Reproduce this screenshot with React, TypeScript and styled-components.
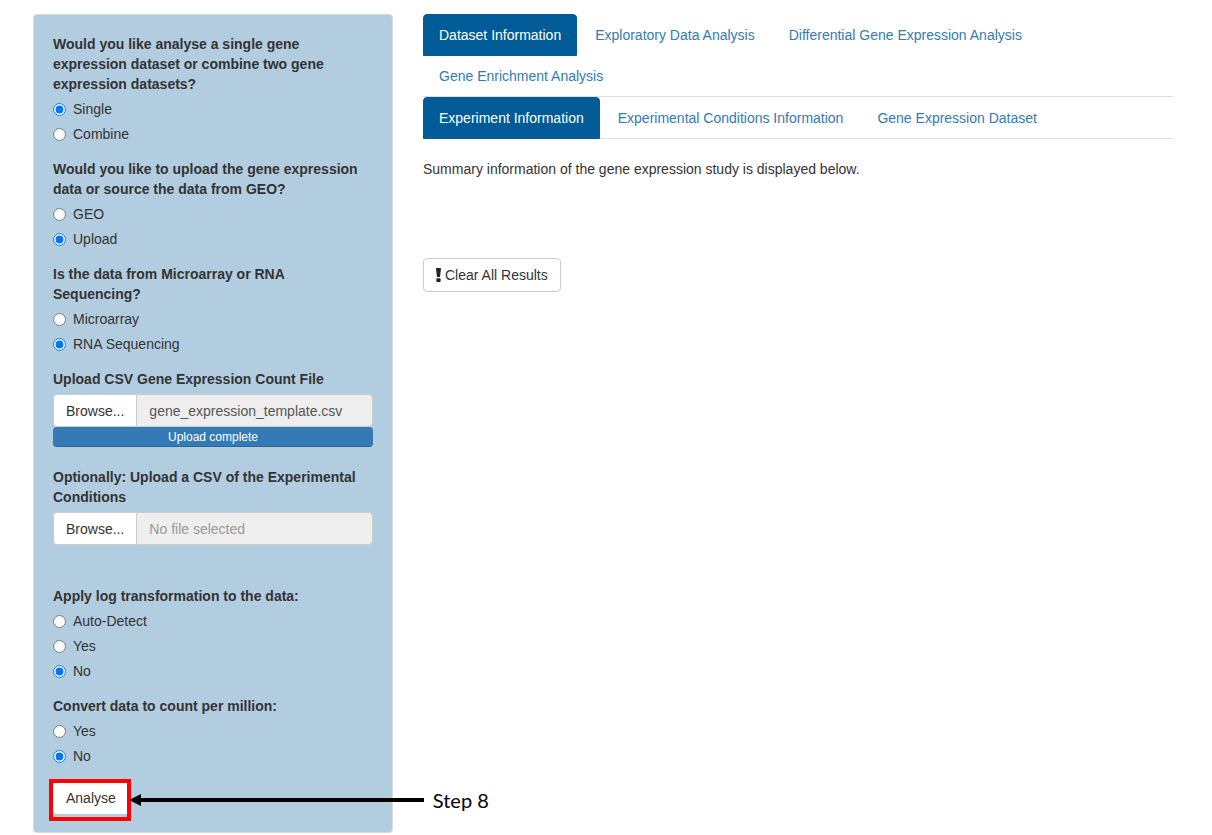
import React, { useId, useState } from "react";
import styled, { createGlobalStyle } from "styled-components";

const GlobalStyle = createGlobalStyle`
  *, *::before, *::after { box-sizing: border-box; }
  body {
    margin: 0;
    background: #fff;
    color: #333;
    font-family: "Liberation Sans", Arial, Helvetica, sans-serif;
    font-size: 14px;
    line-height: 20px;
  }
  input, button { font: inherit; }
`;

const Page = styled.div`
  display: grid;
  grid-template-columns: minmax(0, 1fr) minmax(0, 2fr);
  align-items: start;
  padding: 14px 24px 0 18px;
`;

const SideColumn = styled.aside`
  padding: 0 15px;
`;

const MainColumn = styled.main`
  padding: 0 15px;
`;

const Well = styled.form`
  padding: 19px 19px 18px;
  background: #b2cde0;
  border: 1px solid #d5dade;
  border-radius: 4px;
`;

const Group = styled.fieldset<{ $spaced?: boolean }>`
  min-width: 0;
  margin: ${(p) => (p.$spaced ? "41px" : "0")} 0 15px;
  padding: 0;
  border: 0;
`;

const Legend = styled.legend`
  padding: 0 0 5px;
  font-weight: 700;
`;

const Options = styled.div`
  display: flex;
  flex-direction: column;
  gap: 5px;
`;

const Option = styled.label`
  display: flex;
  align-items: center;
  gap: 7px;
  min-height: 20px;
`;

const Radio = styled.input`
  width: 13px;
  height: 13px;
  margin: 0;
`;

const FileGroup = styled.div`
  margin-bottom: 20px;
`;

const FileLabel = styled.label`
  display: block;
  margin-bottom: 5px;
  font-weight: 700;
`;

const FileRow = styled.div`
  display: flex;
  height: 33px;
`;

const Browse = styled.label`
  flex: none;
  overflow: hidden;
  padding: 6px 12px;
  background: #fff;
  border: 1px solid #ccc;
  border-radius: 4px 0 0 4px;
  cursor: pointer;
`;

const HiddenFile = styled.input`
  position: absolute;
  width: 1px;
  height: 1px;
  opacity: 0;
`;

const FileName = styled.input`
  flex: 1;
  min-width: 0;
  margin-left: -1px;
  padding: 0 12px;
  color: #555;
  background: #eee;
  border: 1px solid #ccc;
  border-radius: 0 4px 4px 0;
  &::placeholder { color: #999; opacity: 1; }
`;

const Progress = styled.div`
  height: 20px;
  color: #fff;
  background: #337ab7;
  border-radius: 4px;
  box-shadow: inset 0 -1px 0 rgba(0, 0, 0, 0.15);
  font-size: 12px;
  text-align: center;
`;

const Button = styled.button`
  display: inline-flex;
  align-items: center;
  gap: 4px;
  padding: 6px 12px;
  color: #333;
  background: #fff;
  border: 1px solid #ccc;
  border-radius: 4px;
  cursor: pointer;
`;

const Submit = styled(Button)`
  height: 33px;
  border-color: #fff;
`;

const Target = styled.div`
  position: relative;
  display: flex;
  width: max-content;
`;

const Highlight = styled.span`
  position: absolute;
  inset: -2px -2px -7px -4px;
  border: 4px solid #f00;
  pointer-events: none;
`;

const Callout = styled.div`
  position: absolute;
  top: 6px;
  left: 100%;
  display: flex;
  align-items: center;
  gap: 9px;
  color: #000;
  font-family: Lato, "Open Sans", sans-serif;
  font-size: 20px;
  line-height: 26px;
  white-space: nowrap;
`;

const Tabs = styled.nav`
  display: flex;
  flex-wrap: wrap;
  border-bottom: 1px solid #ddd;
`;

const Tab = styled.a<{ $active?: boolean }>`
  margin: 0 2px -1px 0;
  padding: 10px 15px;
  border: 1px solid ${(p) => (p.$active ? "#005b96" : "transparent")};
  border-radius: 4px 4px 0 0;
  color: ${(p) => (p.$active ? "#fff" : "#337ab7")};
  background: ${(p) => (p.$active ? "#005b96" : "transparent")};
  text-decoration: none;
`;

const Summary = styled.p`
  margin: 20px 0 79px;
`;

type RadioGroupProps = { title: string; options: string[]; initial: string; spaced?: boolean };

function RadioGroup({ title, options, initial, spaced }: RadioGroupProps) {
  const name = useId();
  const [value, setValue] = useState(initial);
  return (
    <Group $spaced={spaced}>
      <Legend>{title}</Legend>
      <Options>
        {options.map((o) => (
          <Option key={o}>
            <Radio type="radio" name={name} checked={value === o} onChange={() => setValue(o)} />
            {o}
          </Option>
        ))}
      </Options>
    </Group>
  );
}

function FilePicker({ title, initial = "", complete }: { title: string; initial?: string; complete?: boolean }) {
  const id = useId();
  const [file, setFile] = useState(initial);
  return (
    <FileGroup>
      <FileLabel htmlFor={id}>{title}</FileLabel>
      <FileRow>
        <Browse>
          Browse...
          <HiddenFile
            id={id}
            type="file"
            accept=".csv"
            onChange={(e) => setFile(e.target.files?.[0]?.name ?? "")}
          />
        </Browse>
        <FileName type="text" readOnly value={file} placeholder="No file selected" aria-label={title} />
      </FileRow>
      {complete && <Progress role="status">Upload complete</Progress>}
    </FileGroup>
  );
}

function TabBar({ label, items }: { label: string; items: string[] }) {
  const [active, setActive] = useState(items[0]);
  return (
    <Tabs aria-label={label}>
      {items.map((item) => (
        <Tab
          key={item}
          href="#"
          $active={item === active}
          aria-current={item === active ? "page" : undefined}
          onClick={(e) => {
            e.preventDefault();
            setActive(item);
          }}
        >
          {item}
        </Tab>
      ))}
    </Tabs>
  );
}

export default function App() {
  return (
    <>
      <GlobalStyle />
      <Page>
        <SideColumn>
          <Well onSubmit={(e) => e.preventDefault()}>
            <RadioGroup
              title="Would you like analyse a single gene expression dataset or combine two gene expression datasets?"
              options={["Single", "Combine"]}
              initial="Single"
            />
            <RadioGroup
              title="Would you like to upload the gene expression data or source the data from GEO?"
              options={["GEO", "Upload"]}
              initial="Upload"
            />
            <RadioGroup
              title="Is the data from Microarray or RNA Sequencing?"
              options={["Microarray", "RNA Sequencing"]}
              initial="RNA Sequencing"
            />
            <FilePicker title="Upload CSV Gene Expression Count File" initial="gene_expression_template.csv" complete />
            <FilePicker title="Optionally: Upload a CSV of the Experimental Conditions" />
            <RadioGroup
              title="Apply log transformation to the data:"
              options={["Auto-Detect", "Yes", "No"]}
              initial="No"
              spaced
            />
            <RadioGroup title="Convert data to count per million:" options={["Yes", "No"]} initial="No" />
            <Target>
              <Submit type="submit">Analyse</Submit>
              <Highlight />
              <Callout>
                <svg width="295" height="12" viewBox="0 0 295 12" aria-hidden="true">
                  <path d="M0 6 12 0V4H295V8H12V12Z" fill="#000" />
                </svg>
                Step 8
              </Callout>
            </Target>
          </Well>
        </SideColumn>
        <MainColumn>
          <TabBar
            label="Analysis sections"
            items={[
              "Dataset Information",
              "Exploratory Data Analysis",
              "Differential Gene Expression Analysis",
              "Gene Enrichment Analysis",
            ]}
          />
          <TabBar
            label="Dataset sections"
            items={["Experiment Information", "Experimental Conditions Information", "Gene Expression Dataset"]}
          />
          <Summary>Summary information of the gene expression study is displayed below.</Summary>
          <Button type="button">
            <svg width="5" height="14" viewBox="0 0 5 14" aria-hidden="true">
              <path d="M.8 0H4.2Q5 0 5 .8L4 9H1L0 .8Q0 0 .8 0ZM1 10.3H4Q4.6 10.3 4.6 11V13.3Q4.6 14 4 14H1Q.4 14 .4 13.3V11Q.4 10.3 1 10.3Z" fill="#222" />
            </svg>
            Clear All Results
          </Button>
        </MainColumn>
      </Page>
    </>
  );
}
